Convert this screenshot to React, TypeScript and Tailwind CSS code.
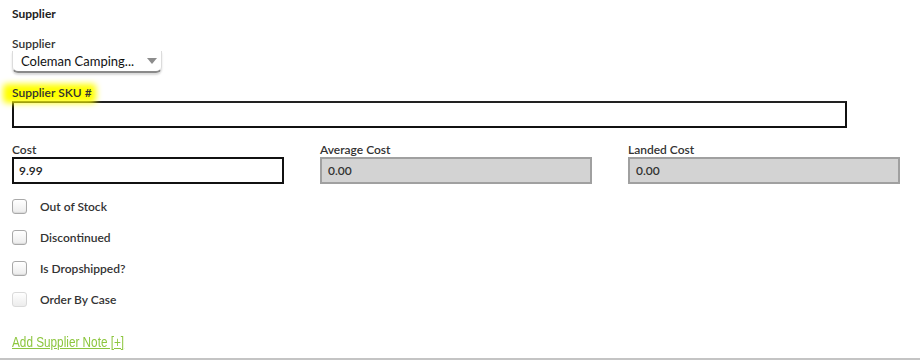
import { useState } from "react";

const font = { fontFamily: "Lato, 'Open Sans', Arial, sans-serif" };

function Checkbox({ label, faded }: { label: string; faded?: boolean }) {
  const [on, setOn] = useState(false);
  return (
    <label className="flex items-center h-[15px] cursor-pointer">
      <input type="checkbox" checked={on} onChange={() => setOn(!on)} className="sr-only" />
      <span
        className={
          "w-[15px] h-[15px] rounded-[3px] border bg-gradient-to-b from-white to-[#ececec] " +
          (faded ? "border-[#dadada]" : "border-[#a9a9a9] shadow-[inset_0_-1px_1px_rgba(0,0,0,0.08)]")
        }
      />
      <span className="ml-[13px] text-[12px] font-semibold text-[#333] leading-[14px]">{label}</span>
    </label>
  );
}

function ReadonlyField({ label, value }: { label: string; value: string }) {
  return (
    <div className="flex flex-col">
      <span className="block h-[14px] text-[12px] font-semibold text-[#333] leading-[14px]">{label}</span>
      <div className="h-[27px] w-[272px] bg-[#d3d3d3] border-2 border-[#a0a0a0] flex items-center px-[6px] text-[12px] font-semibold text-[#333]">
        {value}
      </div>
    </div>
  );
}

export default function App() {
  return (
    <div className="w-[920px] h-[363px] bg-white relative overflow-hidden" style={font}>
      <div className="px-[12px] pt-[7px]">
        <h3 className="h-[14px] text-[12px] font-bold text-[#222] leading-[14px]">Supplier</h3>

        <div className="mt-[16px] h-[14px] text-[12px] font-semibold text-[#333] leading-[14px]">Supplier</div>
        <div className="w-[150px] h-[22px] rounded-b-[6px] border-b-2 border-x border-[#8a8a8a] border-x-[#dcdcdc] shadow-[0_2px_2px_rgba(0,0,0,0.15)] flex items-center justify-between pl-[8px] pr-[3px]">
          <span className="text-[13px] text-[#111] leading-[16px]">Coleman Camping...</span>
          <svg width="10" height="6" viewBox="0 0 10 6" className="mr-[1px]">
            <path d="M0 0 L10 0 L5 6 Z" fill="#8c8c8c" />
          </svg>
        </div>

        <div className="mt-[13px] h-[14px] relative w-fit">
          <span className="absolute -left-[9px] -right-[4px] -top-[2px] -bottom-[3px] bg-[#ffff00] blur-[3px] rounded-sm" />
          <span className="relative block text-[12px] font-semibold text-[#333] leading-[14px]">Supplier SKU #</span>
        </div>
        <div className="mt-[1px] h-[27px] w-[835px] border-2 border-[#111] border-t-[#222] bg-white" />

        <div className="mt-[15px] flex gap-[36px]">
          <div className="flex flex-col">
            <span className="block h-[14px] text-[12px] font-semibold text-[#333] leading-[14px]">Cost</span>
            <div className="h-[27px] w-[272px] border-2 border-[#111] flex items-center px-[5px] text-[12px] font-semibold text-[#222]">
              9.99
            </div>
          </div>
          <ReadonlyField label="Average Cost" value="0.00" />
          <ReadonlyField label="Landed Cost" value="0.00" />
        </div>

        <div className="mt-[15px] flex flex-col gap-[16px]">
          <Checkbox label="Out of Stock" />
          <Checkbox label="Discontinued" />
          <Checkbox label="Is Dropshipped?" />
          <Checkbox label="Order By Case" faded />
        </div>

        <a
          href="#"
          className="inline-block mt-[28px] text-[14px] text-[#8dc63f] underline leading-[14px] origin-left scale-x-[0.84]"
          style={{ fontFamily: "'Liberation Sans', Arial, sans-serif" }}
        >
          Add Supplier Note [+]
        </a>
      </div>
      <div className="absolute left-0 right-0 top-[358px] h-[2px] bg-[#c4c4c4]" />
    </div>
  );
}
